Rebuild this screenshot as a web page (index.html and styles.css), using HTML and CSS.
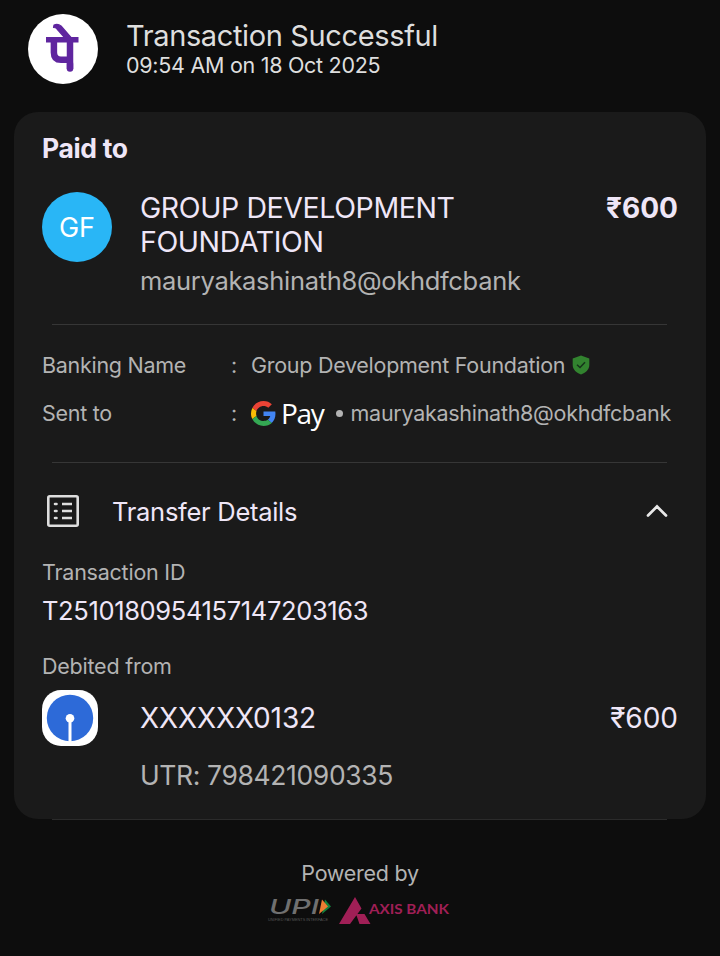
FILE: index.html
```html
<!DOCTYPE html>
<html lang="en">
<head>
  <meta charset="utf-8">
  <title>Transaction Successful</title>
  <link rel="stylesheet" href="styles.css">
</head>

<body>
<header class="top">
  <svg class="logo" viewBox="0 0 70 70">
    <circle cx="35" cy="35" r="35" fill="#fff"/>
    <g fill="none" stroke="#5f259f" stroke-linejoin="round">
      <path d="M18 25.800H50.500" stroke-width="5.500"/>
      <path d="M26 11Q30 9.500 33 12L43 23.500H36.500L29 15Q28 13.500 25.500 13.500z" fill="#5f259f" stroke-width="1.200"/>
      <path d="M25.900 27V38.500Q25.900 45.800 33 45.800H41" stroke-width="6.500"/>
      <path d="M42 26V55" stroke-width="6.500"/>
      <path d="M42 50V54.500" stroke-width="6.500" stroke-linecap="round"/>
    </g>
  </svg>
  <div>
    <h1 class="title">Transaction Successful</h1>
    <p class="time">09:54 AM on 18 Oct 2025</p>
  </div>
</header>

<main class="card">
  <h2 class="paid">Paid to</h2>
  <div class="payee">
    <div class="avatar">GF</div>
    <div class="who">
      <p class="name">GROUP DEVELOPMENT<br>FOUNDATION</p>
      <p class="vpa">mauryakashinath8@okhdfcbank</p>
    </div>
    <b class="amount bold">₹600</b>
  </div>

  <hr>

  <div class="info">
    <span class="key">Banking Name</span><span class="colon">:</span>
    <span class="bank-name">Group Development Foundation</span>
    <svg class="shield" viewBox="0 0 18 20">
      <path d="M9 .5L17.300 3.500V10C17.300 14.500 13.500 18 9 19.500C4.500 18 .7 14.500 .7 10V3.500z" fill="#32832f"/>
      <path d="M5 9.800L8 12.500L13 7.200" fill="none" stroke="#15321a" stroke-width="1.500"/>
    </svg>
  </div>
  <div class="info">
    <span class="key">Sent to</span><span class="colon">:</span>
    <svg class="google" viewBox="0 0 48 48">
      <path fill="#ea4335" d="M24 9.500c3.540 0 6.710 1.220 9.210 3.600l6.850-6.850C35.900 2.380 30.470 0 24 0 14.620 0 6.510 5.380 2.560 13.220l7.980 6.190C12.430 13.720 17.740 9.500 24 9.500z"/>
      <path fill="#4285f4" d="M46.980 24.550c0-1.570-.15-3.090-.38-4.550H24v9.020h12.940c-.58 2.960-2.260 5.480-4.780 7.180l7.730 6c4.510-4.180 7.090-10.360 7.090-17.650z"/>
      <path fill="#fbbc05" d="M10.530 28.590c-.48-1.450-.76-2.990-.76-4.590s.27-3.140.76-4.590l-7.980-6.190C.92 16.460 0 20.120 0 24c0 3.880.92 7.540 2.560 10.780l7.970-6.190z"/>
      <path fill="#34a853" d="M24 48c6.480 0 11.930-2.130 15.890-5.810l-7.730-6c-2.150 1.450-4.920 2.300-8.160 2.300-6.260 0-11.570-4.220-13.470-9.910l-7.980 6.190C6.510 42.620 14.620 48 24 48z"/>
    </svg>
    <span class="pay">Pay</span>
    <span class="dot"></span>
    <span class="sent-vpa">mauryakashinath8@okhdfcbank</span>
  </div>

  <hr>

  <div class="details">
    <svg class="list" viewBox="0 0 32 32" fill="none" stroke="#dedede">
      <rect x="1.300" y="1.300" width="29.400" height="29.400" rx="1.500" stroke-width="2.600"/>
      <path d="M8 9H9.500M8 16H9.500M8 23H9.500" stroke-width="2.600" stroke-linecap="round"/>
      <path d="M15 9H25M15 16H25M15 23H25" stroke-width="2.400"/>
    </svg>
    <h3 class="details-title">Transfer Details</h3>
    <svg class="chevron" viewBox="0 0 22 14">
      <path d="M2 11.500L11 2.500L20 11.500" fill="none" stroke="#e8e8e8" stroke-width="2.700" stroke-linecap="round"/>
    </svg>
  </div>

  <p class="label txn">Transaction ID</p>
  <p class="txn-id">T2510180954157147203163</p>
  <p class="label debit">Debited from</p>
  <div class="account">
    <svg class="sbi" viewBox="0 0 56 56">
      <rect width="56" height="56" rx="19" fill="#fff"/>
      <circle cx="28" cy="28" r="23.200" fill="#2d6ad8"/>
      <circle cx="28" cy="28.300" r="4.300" fill="#fff"/>
      <path d="M28 28V52" stroke="#fff" stroke-width="3"/>
    </svg>
    <span class="acc-no">XXXXXX0132</span>
    <span class="amount">₹600</span>
  </div>
  <p class="utr">UTR: 798421090335</p>
  <hr class="last">
</main>

<footer class="foot">
  <p class="powered">Powered by</p>
  <div class="brands">
    <svg class="upi" viewBox="0 0 64 28">
      <text x="1" y="17" class="upi-text" textLength="50" lengthAdjust="spacingAndGlyphs">UPI</text>
      <path d="M57 2.500L63 9.500L54 17z" fill="#14803c"/>
      <path d="M54 2.500L60 9.500L51 17z" fill="#ef7d32"/>
      <text x="0" y="23.500" class="upi-sub" textLength="60" lengthAdjust="spacingAndGlyphs">UNIFIED PAYMENTS INTERFACE</text>
    </svg>
    <svg class="axis" viewBox="0 0 112 28">
      <path d="M16 0L22.500 11.500L11 27H0zM17 17H25.500L31.500 27H20.500z" fill="#a01f56"/>
      <text x="30" y="17" class="axis-text" textLength="80" lengthAdjust="spacingAndGlyphs">AXIS BANK</text>
    </svg>
  </div>
</footer>
</body>
</html>
```
FILE: styles.css
```css
*{
  margin: 0;
  padding: 0;
  box-sizing: border-box;
}
body{
  width: 720px;
  height: 956px;
  overflow: hidden;
  background: #0d0d0d;
  color: #efe6f7;
  font-family: Inter, "Noto Sans", sans-serif;
  font-size: 21.5px;
  letter-spacing: -.28px;
}
svg{
  display: block;
  flex: none;
  overflow: visible;
}
.top{
  display: flex;
  height: 112px;
  padding: 14px 28px;
  gap: 28px;
  color: #dedede;
}
.logo{
  width: 70px;
  height: 70px;
}
.title{
  padding-top: 4px;
  font-size: 29px;
  font-weight: 400;
  line-height: 36px;
  letter-spacing: -.37px;
}
.time{
  line-height: 22px;
}
.card{
  height: 707px;
  margin: 0 14px;
  padding: 20px 28px 0;
  background: #1a1a1a;
  border-radius: 24px;
}
.paid{
  font-size: 26.5px;
  font-weight: 700;
  line-height: 32px;
  letter-spacing: -.35px;
}
.payee{
  display: flex;
  height: 132px;
  margin-top: 28px;
}
.avatar{
  width: 70px;
  height: 70px;
  border-radius: 50%;
  background: #29b6f6;
  color: #fff;
  font-size: 27px;
  line-height: 72px;
  text-align: center;
  letter-spacing: 0;
}
.who{
  flex: 1;
  margin-left: 28px;
}
.name{
  font-size: 28.5px;
  line-height: 34px;
  margin-top: -1px;
  letter-spacing: -.4px;
}
.vpa{
  margin-top: 6px;
  color: #b3b3b3;
  font-size: 25.5px;
  line-height: 32px;
  letter-spacing: -.31px;
}
.amount{
  font-size: 28px;
  line-height: 32px;
  letter-spacing: 0;
}
.bold{
  font-weight: 700;
}
hr{
  margin: 0 11px 0 10px;
  border: none;
  height: 1px;
  background: #363636;
}
.info{
  display: flex;
  align-items: center;
  height: 48px;
  color: #b3b3b3;
}
hr + .info{
  margin-top: 16px;
}
.info + hr{
  margin-top: 25px;
}
.key{
  width: 189px;
}
.colon{
  width: 20px;
}
.shield{
  width: 18px;
  height: 20px;
  margin-left: 7px;
}
.google{
  width: 25px;
  height: 25px;
}
.pay{
  margin-left: 5px;
  color: #fff;
  font-family: "Open Sans", sans-serif;
  font-size: 28px;
  font-weight: 500;
  letter-spacing: -1.3px;
}
.dot{
  width: 7px;
  height: 7px;
  margin: 0 8px 0 12px;
  border-radius: 50%;
  background: #b3b3b3;
}
.details{
  display: flex;
  align-items: center;
  height: 32px;
  margin-top: 32px;
  padding: 0 10px 0 5px;
}
.list{
  width: 32px;
  height: 32px;
}
.details-title{
  flex: 1;
  margin-left: 33px;
  font-size: 25.5px;
  font-weight: 400;
}
.chevron{
  width: 22px;
  height: 14px;
}
.label{
  color: #b3b3b3;
  line-height: 28px;
  letter-spacing: -.23px;
}
.txn{
  margin-top: 31px;
}
.txn-id{
  margin-top: 9px;
  font-size: 25.5px;
  line-height: 32px;
  letter-spacing: -.36px;
}
.debit{
  margin-top: 25px;
}
.account{
  display: flex;
  align-items: center;
  height: 56px;
  margin-top: 10px;
}
.sbi{
  width: 56px;
  height: 56px;
}
.acc-no{
  flex: 1;
  margin-left: 42px;
  font-size: 28px;
  letter-spacing: -.1px;
}
.utr{
  margin: 13px 0 28px 98px;
  color: #b3b3b3;
  font-size: 26.5px;
  line-height: 32px;
  letter-spacing: -.37px;
}
.last{
  background: #2b2b2b;
}
.foot{
  padding-top: 38px;
  color: #b3b3b3;
}
.powered{
  line-height: 32px;
  text-align: center;
}
.brands{
  display: flex;
  gap: 7px;
  margin: 8px 0 0 268px;
  letter-spacing: 0;
}
.upi{
  width: 64px;
  height: 28px;
}
.axis{
  width: 112px;
  height: 28px;
}
.upi-text{
  fill: #707070;
  font: italic 500 20px Inter, sans-serif;
}
.upi-sub{
  fill: #555;
  font: 3.5px "Liberation Sans", sans-serif;
}
.axis-text{
  fill: #a01f56;
  font: 700 13.5px Lato, sans-serif;
}
```
